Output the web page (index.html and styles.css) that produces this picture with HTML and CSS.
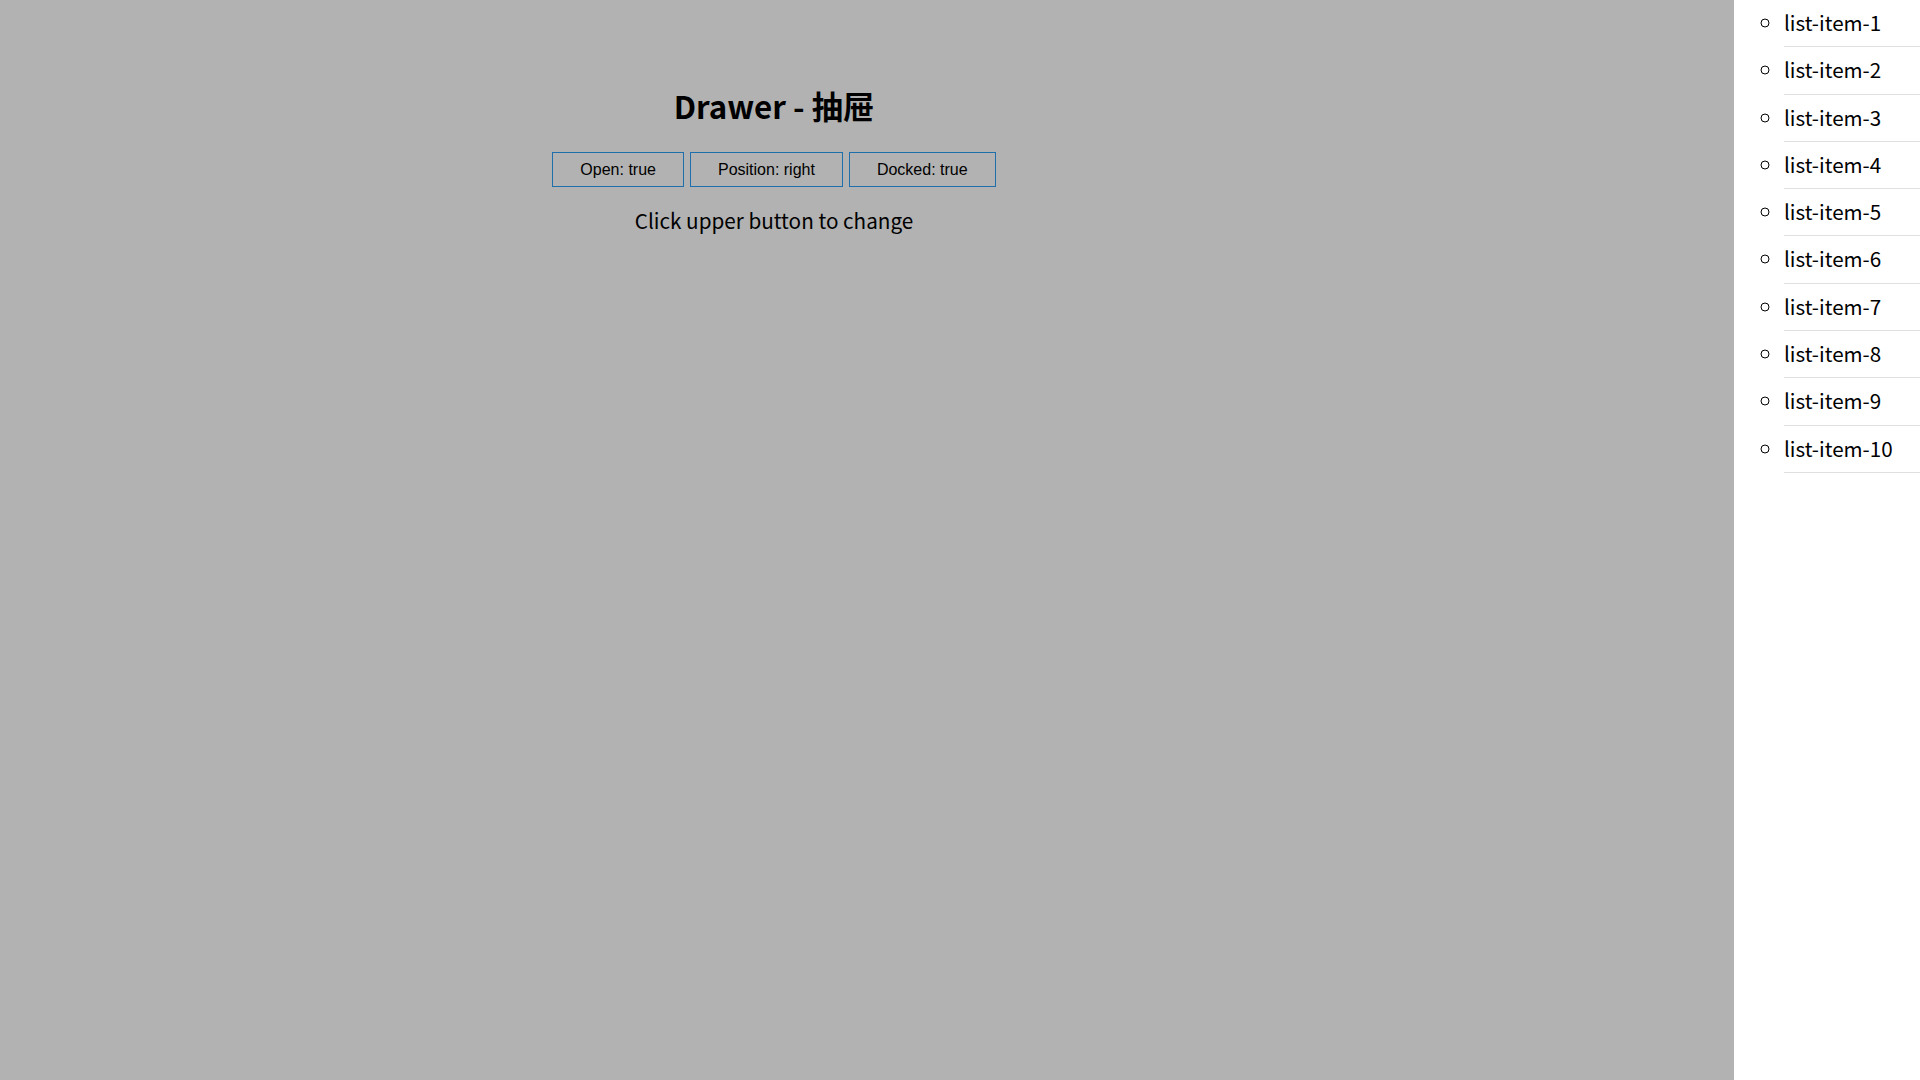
FILE: index.html
```html
<!DOCTYPE html>
<html lang="zh">
<head>
<meta charset="utf-8">
<title>Drawer</title>
<link rel="stylesheet" href="styles.css">
</head>
<body>
<div class="layout">
  <main class="main">
    <div class="content">
      <h1 class="title">Drawer - 抽屉</h1>
      <div class="buttons">
        <button class="btn">Open: true</button>
        <button class="btn">Position: right</button>
        <button class="btn">Docked: true</button>
      </div>
      <p class="hint">Click upper button to change</p>
    </div>
  </main>
  <aside class="drawer">
    <ul class="list">
      <li class="item">list-item-1</li>
      <li class="item">list-item-2</li>
      <li class="item">list-item-3</li>
      <li class="item">list-item-4</li>
      <li class="item">list-item-5</li>
      <li class="item">list-item-6</li>
      <li class="item">list-item-7</li>
      <li class="item">list-item-8</li>
      <li class="item">list-item-9</li>
      <li class="item">list-item-10</li>
    </ul>
  </aside>
</div>
</body>
</html>
```

FILE: styles.css
```css
html, body {
  margin: 0;
  padding: 0;
  height: 100%;
}
body {
  font-family: "Noto Sans CJK SC", "Noto Sans", sans-serif;
  color: #000;
}
.layout {
  display: flex;
  height: 1080px;
}
.main {
  flex: 1;
  background: #b2b2b2;
  padding-right: 186px;
}
.content {
  text-align: center;
  padding-top: 1px;
}
.title {
  font-size: 31.3px;
  font-weight: 700;
  margin: 84px 0 0;
  line-height: 42px;
}
.buttons {
  display: flex;
  justify-content: center;
  gap: 6px;
  margin-top: 25px;
}
.btn {
  font-family: "Liberation Sans", Arial, sans-serif;
  font-size: 16px;
  line-height: 19px;
  padding: 7px 27px;
  border: 1px solid #1f6fad;
  background: transparent;
  color: #000;
  border-radius: 0;
}
.hint {
  font-size: 20.7px;
  margin: 20px 0 0;
  line-height: 26px;
}
.drawer {
  width: 186px;
  background: #fff;
}
.list {
  margin: 0;
  padding: 0 0 0 50px;
  list-style: circle;
}
.item {
  font-size: 20.6px;
  line-height: 26.3px;
  padding: 9px 0 11px;
  border-bottom: 1px solid #e0e0e0;
}
```
